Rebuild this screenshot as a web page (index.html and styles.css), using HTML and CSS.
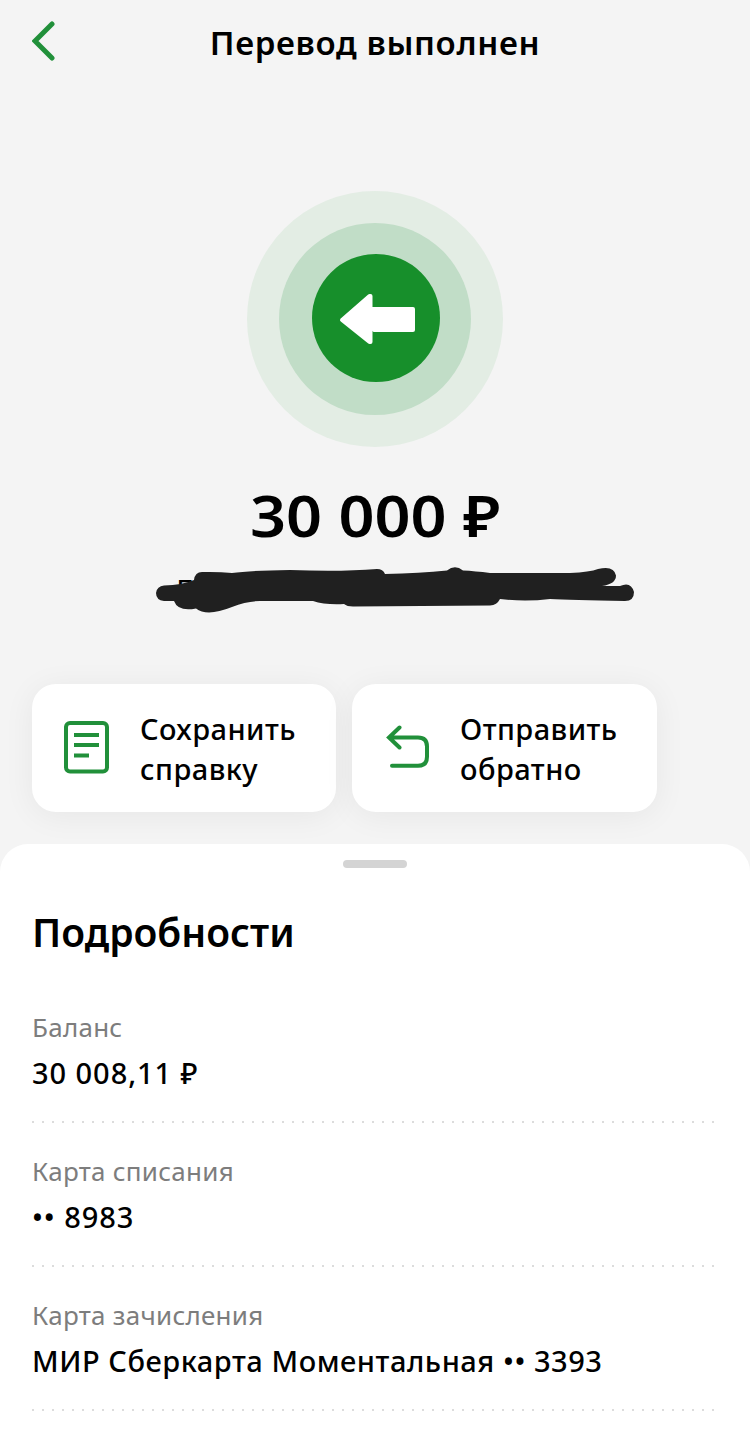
FILE: index.html
```
<!DOCTYPE html>
<html lang="ru">
<head>
    <meta charset="UTF-8">
    <meta name="viewport" content="width=device-width, initial-scale=1.0">
    <title>Перевод выполнен</title>
    <link rel="stylesheet" href="styles.css">
</head>
<body>
    <header class="header">
        <svg class="back" width="32" height="48" viewBox="0 0 32 48" fill="none">
            <path d="M20 7L3 24L20 41" stroke="#21903a" stroke-width="5" stroke-linecap="round" stroke-linejoin="miter"/>
        </svg>
        <h1 class="title">Перевод выполнен</h1>
    </header>

    <main class="result">
        <div class="status">
            <div class="ring">
                <div class="circle">
                    <svg width="128" height="128" viewBox="0 0 128 128" fill="#fff" stroke="#fff" stroke-width="4" stroke-linejoin="round">
                        <path d="M30 66L57.500 42H58.500V88H57.500Z"/>
                        <path d="M60 55H101V76H62L58 71.500Z"/>
                    </svg>
                </div>
            </div>
        </div>
        <div class="amount">30 000 ₽</div>
        <div class="recipient">
            <span>П</span>
            <svg class="scribble" width="480" height="50" viewBox="155 565 480 50">
                <path fill="#202020" d="M164 585.500Q182 585 194 580Q195 572 202 572Q218 571.500 232 573Q250 570.500 290 570Q340 572 377 569Q383 569 385 574Q420 573 447 570.500Q455 564 463 570.500Q475 571 490 573H570Q590 572 598 569Q614 565 616 575.500Q616 584 602 586H620Q631 581 634 592Q634 601 625 601Q570 600 550 599Q525 602 500 599Q497 605 490 605.500L353 606.500Q347 606.500 344 604Q325 605 313 601H260Q247 601 232 607Q207 617 196 608.500Q178 612 174 601H164Q156 600 156 593Q157 586 164 585.500Z"/>
            </svg>
        </div>
    </main>

    <div class="actions">
        <button class="action">
            <svg width="48" height="56" viewBox="0 0 48 56" fill="none" stroke="#21903a" stroke-width="4">
                <rect x="3" y="3" width="41" height="48.500" rx="4"/>
                <path d="M11 15H36M11 25H36M11 35.500H26"/>
            </svg>
            <span class="action-text">Сохранить<br>справку</span>
        </button>
        <button class="action">
            <svg width="48" height="56" viewBox="0 0 48 56" fill="none" stroke="#21903a" stroke-width="4" stroke-linecap="round">
                <path d="M16.500 7.500L6 17.500L16.500 27.500M6.500 17.500H35Q44 17.500 44 26.500V36.800Q44 45.800 35 45.800H9"/>
            </svg>
            <span class="action-text">Отправить<br>обратно</span>
        </button>
    </div>

    <section class="sheet">
        <div class="handle"></div>
        <h2 class="sheet-title">Подробности</h2>
        <div class="row">
            <div class="label">Баланс</div>
            <div class="value number">30 008,11 ₽</div>
        </div>
        <div class="row">
            <div class="label">Карта списания</div>
            <div class="value number">•• 8983</div>
        </div>
        <div class="row">
            <div class="label">Карта зачисления</div>
            <div class="value">МИР Сберкарта Моментальная •• 3393</div>
        </div>
    </section>
</body>
</html>
```
FILE: styles.css
```
* {
    box-sizing: border-box;
}
body {
    margin: 0;
    height: 1431px;
    overflow: hidden;
    display: flex;
    flex-direction: column;
    background-color: #f4f4f4;
    color: #000;
    font-family: 'Noto Sans', sans-serif;
}
.header {
    display: grid;
    grid-template-columns: 64px 1fr 64px;
    align-items: center;
    height: 86px;
    padding: 0 32px;
}
.back {
    margin-top: -4px;
}
.title {
    margin: 0;
    font-size: 33px;
    font-weight: 600;
    letter-spacing: 0.65px;
    line-height: 44px;
    text-align: center;
    white-space: nowrap;
}
.result {
    display: flex;
    flex-direction: column;
    align-items: center;
    padding-top: 105px;
}
.status,
.ring,
.circle {
    display: flex;
    align-items: center;
    justify-content: center;
    border-radius: 50%;
}
.status {
    width: 256px;
    height: 256px;
    background-color: #e3ede4;
}
.ring {
    width: 192px;
    height: 192px;
    background-color: #c1ddc7;
}
.circle {
    width: 128px;
    height: 128px;
    margin: -2px 0 0 2px;
    background-color: #178f2b;
}
.amount {
    margin-top: 32px;
    font-size: 58px;
    font-weight: 600;
    line-height: 72px;
    white-space: nowrap;
    transform: scaleX(1.087); /* wide digits */
}
.recipient {
    position: relative;
    width: 480px;
    height: 50px;
    margin: 14px 0 0 40px;
    padding-left: 22px;
    font-size: 22px;
    font-weight: 600;
    line-height: 44px;
}
/* marker stroke over the name */
.scribble {
    position: absolute;
    top: 0;
    left: 0;
}
.actions {
    display: flex;
    gap: 16px;
    margin-top: 69px;
    padding-left: 32px;
}
.action {
    display: flex;
    align-items: center;
    gap: 29px;
    width: 304px;
    height: 128px;
    padding: 0 0 0 31px;
    border: none;
    border-radius: 24px;
    background-color: #fff;
    box-shadow: 0 4px 32px rgba(0, 0, 0, 0.06);
    color: #000;
    font-family: inherit;
    font-size: 29px;
    font-weight: 500;
    letter-spacing: 0.45px;
    line-height: 40px;
    text-align: left;
    white-space: nowrap;
}
.action + .action {
    width: 305px;
}
.action-text {
    padding-top: 2px;
}
.sheet {
    flex: 1;
    margin-top: 32px;
    padding: 16px 32px 0;
    border-radius: 28px 28px 0 0;
    background-color: #fff;
    z-index: 1;
}
.handle {
    width: 64px;
    height: 8px;
    margin: 0 auto;
    border-radius: 4px;
    background-color: #d4d4d4;
}
.sheet-title {
    margin: 36px 0 0;
    font-size: 39px;
    font-weight: 600;
    line-height: 56px;
}
.row {
    height: 144px;
    padding-top: 30px;
    /* dotted divider */
    background: repeating-linear-gradient(to right, #dcdcdc 0 2px, transparent 2px 10px) left bottom / 682px 2px no-repeat;
}
.sheet-title + .row {
    margin-top: 19px;
}
.label {
    color: #7d7d7d;
    font-size: 26px;
    letter-spacing: 0.25px;
    line-height: 36px;
}
.value {
    margin-top: 6px;
    font-size: 29px;
    font-weight: 500;
    letter-spacing: 0.55px;
    line-height: 44px;
    white-space: nowrap;
}
.number {
    letter-spacing: 0.95px;
}
```
